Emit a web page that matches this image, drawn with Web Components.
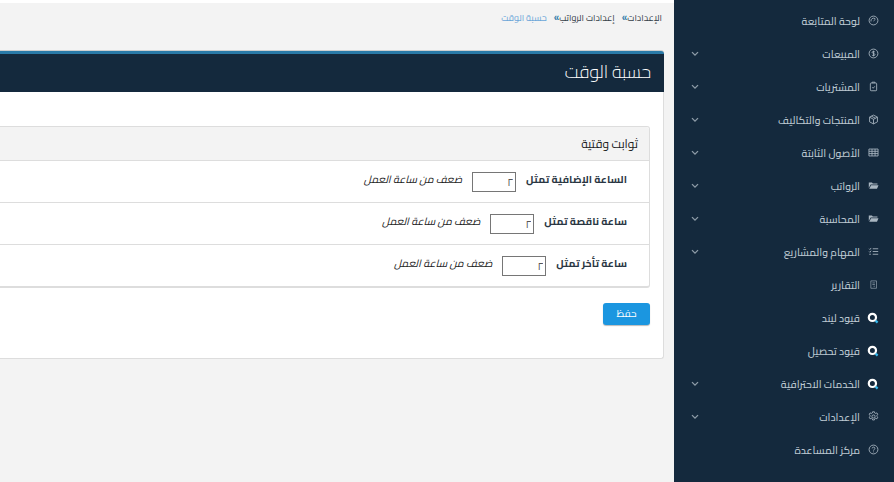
<!DOCTYPE html>
<html lang="ar" dir="rtl"><head><meta charset="utf-8"><title>حسبة الوقت</title>
<style>
html,body{margin:0;height:100%;overflow:hidden;background:#fff}
body{font-family:"Cairo","Noto Sans Arabic","DejaVu Sans",sans-serif}
</style></head><body>

<app-shell>
  <side-nav slot="nav">
    <nav-item icon="gauge">لوحة المتابعة</nav-item>
    <nav-item icon="dollar" sub>المبيعات</nav-item>
    <nav-item icon="clipboard" sub>المشتريات</nav-item>
    <nav-item icon="cube" sub>المنتجات والتكاليف</nav-item>
    <nav-item icon="table" sub>الأصول الثابتة</nav-item>
    <nav-item icon="folder" sub>الرواتب</nav-item>
    <nav-item icon="folder" sub>المحاسبة</nav-item>
    <nav-item icon="tasks" sub>المهام والمشاريع</nav-item>
    <nav-item icon="report">التقارير</nav-item>
    <nav-item icon="search">قيود ليند</nav-item>
    <nav-item icon="search">قيود تحصيل</nav-item>
    <nav-item icon="search" sub>الخدمات الاحترافية</nav-item>
    <nav-item icon="gear" sub>الإعدادات</nav-item>
    <nav-item icon="help">مركز المساعدة</nav-item>
  </side-nav>
  <bread-crumbs>
    <a>الإعدادات</a>
    <a>إعدادات الرواتب</a>
    <a current>حسبة الوقت</a>
  </bread-crumbs>
  <page-panel heading="حسبة الوقت">
    <const-card heading="ثوابت وقتية">
      <const-row label="الساعة الإضافية تمثل" value="٢" note="ضعف من ساعة العمل"></const-row>
      <const-row label="ساعة ناقصة تمثل" value="٢" note="ضعف من ساعة العمل"></const-row>
      <const-row label="ساعة تأخر تمثل" value="٢" note="ضعف من ساعة العمل"></const-row>
    </const-card>
    <save-button>حفظ</save-button>
  </page-panel>
</app-shell>

<script>
const ICONS = {
  gauge: '<circle cx="7" cy="7" r="5.6"/><path d="M3.8 8.2a3.4 3.4 0 0 1 5.2-3.6M7 7.6l2.6-2.4"/>',
  dollar: '<circle cx="7" cy="7" r="5.6"/><path d="M8.8 5.2C8.4 4.4 5.2 4 5.2 5.6S8.9 6.6 8.9 8.4 5.5 9.9 5 8.8M7 3.4v7.2"/>',
  clipboard: '<rect x="3" y="2.6" width="8" height="9.8" rx="1"/><path d="M5.2 2.6V1.5h3.6v1.1M5.4 8l1.2 1.2 2-2.4"/>',
  cube: '<path d="M7 1.4l5 2.6v6L7 12.6 2 10V4zM2 4l5 2.8L12 4M7 6.8v5.8M4.4 2.8l5 2.6"/>',
  table: '<path d="M1.2 2.6h11.6v8.8H1.2zM1.2 5.5h11.6M1.2 8.4h11.6M5.1 2.6v8.8M9 2.6v8.8"/>',
  folder: '<path fill="currentColor" stroke="none" d="M1 3.2h4l1.2 1.2H12v1.4H3.4L1 10.2z"/><path fill="currentColor" stroke="none" d="M3.9 6.6H13.4l-2 4.6H1.6z"/>',
  tasks: '<path d="M6 3.5h7M6 7h7M6 10.5h7M1.4 3.5l1 1 1.6-2M1.4 7l1 1 1.6-2M1.6 10.5h2"/>',
  report: '<path d="M3.6 2.4h7.2v9.4H3.6zM5.6 5h3.2M5.6 7h3.2M7 9.2h1.8" opacity=".7"/>',
  gear: '<circle cx="7" cy="7" r="2"/><path d="M5.8 1h2.4l.4 1.6 1.2.6 1.5-.8 1.2 2-1.2 1.1v1.4l1.2 1.1-1.2 2-1.5-.8-1.2.6-.4 1.6H5.8l-.4-1.6-1.2-.6-1.5.8-1.2-2 1.2-1.1V5.500L1.500 4.400l1.200-2 1.500.8 1.200-.6z"/>',
  help: '<circle cx="7" cy="7" r="5.6"/><path d="M5.3 5.600c0-2.200 3.500-2.200 3.500 0 0 1.400-1.800 1.300-1.800 2.800M7 9.600v1"/>'
};

class AppShell extends HTMLElement {
  connectedCallback() {
    this.attachShadow({ mode: 'open' });
    this.shadowRoot.innerHTML = `
      <style>
        :host { display: flex; height: 482px; width: 894px; background: #fff; direction: rtl; overflow: hidden; }
        .side { flex: 0 0 220px; background: #14293d; }
        main { flex: 1 1 0; min-width: 0; margin-top: 3px; background: #f3f3f3; overflow: hidden; display: flex; flex-direction: column; align-items: flex-start; }
      </style>
      <div class="side"><slot name="nav"></slot></div>
      <main><slot></slot></main>
    `;
  }
}
customElements.define('app-shell', AppShell);

class SideNav extends HTMLElement {
  connectedCallback() {
    this.attachShadow({ mode: 'open' });
    this.shadowRoot.innerHTML = `
      <style>
        :host { display: flex; flex-direction: column; padding-top: 4px; color: #bcc8d1; font-size: 10.5px; font-weight: 500; }
      </style>
      <slot></slot>
    `;
  }
}
customElements.define('side-nav', SideNav);

class NavItem extends HTMLElement {
  connectedCallback() {
    const name = this.getAttribute('icon');
    const icon = name === 'search'
      ? `<svg viewBox="0 0 14 14" width="14" height="14"><circle cx="6.400" cy="6.400" r="3.600" fill="none" stroke="#fff" stroke-width="2.200"/><path d="M9.600 9.600l2 2" stroke="#35b6ea" stroke-width="2.200" fill="none"/></svg>`
      : `<svg viewBox="0 0 14 14" width="11" height="11" fill="none" stroke="currentColor" stroke-width="1.100">${ICONS[name]}</svg>`;
    this.attachShadow({ mode: 'open' });
    this.shadowRoot.innerHTML = `
      <style>
        :host { display: flex; align-items: center; height: 33px; padding: 0 14px 0 17px; }
        .icon { display: flex; justify-content: center; width: 14px; margin-left: 6px; color: #a9b6c1; }
        .text { flex: 1; line-height: 18px; white-space: nowrap; }
        .chev { display: flex; color: #8d9ba7; }
      </style>
      <span class="icon">${icon}</span>
      <span class="text"><slot></slot></span>
      ${this.hasAttribute('sub') ? '<span class="chev"><svg viewBox="0 0 10 8" width="8" height="6" fill="none" stroke="currentColor" stroke-width="1.800"><path d="M1 1.500l4 4 4-4"/></svg></span>' : ''}
    `;
  }
}
customElements.define('nav-item', NavItem);

class BreadCrumbs extends HTMLElement {
  connectedCallback() {
    const parts = [...this.querySelectorAll('a')].map((a, i, all) =>
      `<span class="${a.hasAttribute('current') ? 'cur' : ''}">${a.textContent}</span>${i < all.length - 1 ? '<b>»</b>' : ''}`
    ).join('');
    this.attachShadow({ mode: 'open' });
    this.shadowRoot.innerHTML = `
      <style>
        :host { display: flex; align-items: center; height: 14px; margin: 7px 12px 27px 0; font-size: 9px; color: #333d47; white-space: nowrap; flex: none; }
        b { font-weight: 700; font-size: 10px; color: #2a7aa8; margin: 0 0 0 7px; font-family: "Liberation Sans", sans-serif; }
        .cur { color: #6aa5d8; }
      </style>
      ${parts}
    `;
  }
}
customElements.define('bread-crumbs', BreadCrumbs);

class PagePanel extends HTMLElement {
  connectedCallback() {
    this.attachShadow({ mode: 'open' });
    this.shadowRoot.innerHTML = `
      <style>
        :host { display: block; flex: none; width: 900px; margin-right: 10px; box-sizing: border-box; background: #fff; border: 1px solid #ddd; border-top: 0; border-radius: 3px; height: 308px; }
        header { height: 38px; line-height: 35px; padding-right: 13px; background: #14293d; border-top: 3px solid #2a7aa8; box-shadow: 0 -1px 0 #cfcfcf; border-radius: 3px 3px 0 0; color: #fff; font-size: 18px; font-weight: 300; margin: 0 -1px 0 0; }
        .body { padding: 34px 13px 0; display: flex; flex-direction: column; align-items: flex-start; }
      </style>
      <header>${this.getAttribute('heading')}</header>
      <div class="body"><slot></slot></div>
    `;
  }
}
customElements.define('page-panel', PagePanel);

class ConstCard extends HTMLElement {
  connectedCallback() {
    this.attachShadow({ mode: 'open' });
    this.shadowRoot.innerHTML = `
      <style>
        :host { display: block; width: 100%; box-sizing: border-box; border: 1px solid #ddd; border-bottom-width: 2px; border-radius: 3px; background: #fff; }
        h3 { margin: 0; height: 33px; line-height: 33px; padding-right: 11px; font-size: 12px; font-weight: 400; color: #222; background: #f3f3f3; border-bottom: 1px solid #ddd; border-radius: 3px 3px 0 0; }
      </style>
      <h3>${this.getAttribute('heading')}</h3>
      <slot></slot>
    `;
  }
}
customElements.define('const-card', ConstCard);

class ConstRow extends HTMLElement {
  connectedCallback() {
    this.attachShadow({ mode: 'open' });
    this.shadowRoot.innerHTML = `
      <style>
        :host { display: flex; align-items: center; height: 42px; box-sizing: border-box; padding-right: 22px; font-size: 10.5px; color: #2a3642; border-bottom: 1px solid #ddd; }
        :host(:last-child) { height: 41px; border-bottom: 0; }
        label { font-weight: 700; white-space: nowrap; position: relative; top: -3px; }
        input { box-sizing: border-box; width: 44px; height: 20px; margin: 0 10px 0 10px; padding: 0 2px; border: 1px solid #767676; border-radius: 0; background: #fff; color: #555; font: inherit; font-size: 11px; direction: rtl; outline: none; }
        em { font-size: 10.5px; white-space: nowrap; color: #222; position: relative; top: -3px; }
      </style>
      <label>${this.getAttribute('label')}</label>
      <input value="${this.getAttribute('value')}">
      <em>${this.getAttribute('note')}</em>
    `;
  }
}
customElements.define('const-row', ConstRow);

class SaveButton extends HTMLElement {
  connectedCallback() {
    this.attachShadow({ mode: 'open' });
    this.shadowRoot.innerHTML = `
      <style>
        :host { display: block; margin-top: 15px; }
        button { display: block; width: 47px; height: 22px; padding: 0; border: 0; border-radius: 3px; background: #1b96e0; box-shadow: 0 1px 1px #bbb; color: #fff; font: inherit; font-size: 10px; line-height: 18px; }
      </style>
      <button><slot></slot></button>
    `;
  }
}
customElements.define('save-button', SaveButton);
</script>
</body></html>
